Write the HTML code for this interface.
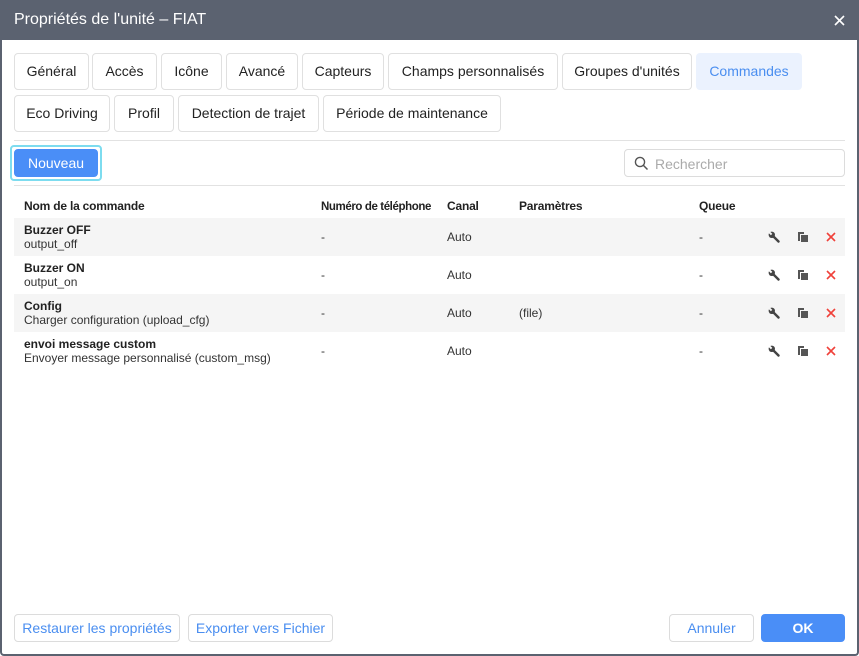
<!DOCTYPE html>
<html><head><meta charset="utf-8"><style>
*{box-sizing:border-box;margin:0;padding:0}
body{width:859px;height:656px;overflow:hidden;background:#fff;font-family:"Liberation Sans",Arial,sans-serif;position:relative}
.frame{position:absolute;left:0;top:0;width:859px;height:656px;border:2px solid #5b6270;border-top:none;border-radius:0 0 4px 4px}
.title{position:absolute;left:0;top:0;width:859px;height:40px;background:#5b6270;color:#fff;font-size:16px;line-height:40px;padding-left:14px}
.close{position:absolute;right:14px;top:15px}
.tab{position:absolute;height:37px;border:1px solid #e0e0e0;border-radius:4px;font-size:14px;color:#222;text-align:center;line-height:35px;background:#fff}
.tab.act{background:#ebf2fe;border-color:#ebf2fe;color:#4a8ef0}
.sep{position:absolute;left:14px;width:831px;height:1px;background:#e2e2e2}
.btn{position:absolute;border:1px solid #dcdcdc;border-radius:4px;font-size:14px;color:#4a8ef0;text-align:center;background:#fff}
.prim{background:#4a8ef7;border-color:#4a8ef7;color:#fff}
.th{position:absolute;top:199px;font-size:12px;font-weight:bold;color:#222;letter-spacing:-0.2px}
.row{position:absolute;left:14px;width:831px;height:38px}
.row.g{background:#f5f5f5}
.c{position:absolute;font-size:12px;color:#333}
.n1{left:10px;top:5px;font-weight:bold;color:#222}
.n2{left:10px;top:19px}
.ic{position:absolute;top:13px}
</style></head><body>
<div class="title">Propriétés de l'unité – FIAT</div>
<svg class="close" width="11" height="11" viewBox="0 0 11 11"><path d="M1 1L10 10M10 1L1 10" stroke="#fff" stroke-width="1.6"/></svg>
<div class="frame"></div>

<div class="tab" style="left:14px;top:53px;width:75px">Général</div>
<div class="tab" style="left:92px;top:53px;width:65px">Accès</div>
<div class="tab" style="left:161px;top:53px;width:61px">Icône</div>
<div class="tab" style="left:226px;top:53px;width:72px">Avancé</div>
<div class="tab" style="left:302px;top:53px;width:82px">Capteurs</div>
<div class="tab" style="left:388px;top:53px;width:170px">Champs personnalisés</div>
<div class="tab" style="left:562px;top:53px;width:130px">Groupes d'unités</div>
<div class="tab act" style="left:696px;top:53px;width:106px">Commandes</div>
<div class="tab" style="left:14px;top:95px;width:96px">Eco Driving</div>
<div class="tab" style="left:114px;top:95px;width:60px">Profil</div>
<div class="tab" style="left:178px;top:95px;width:141px">Detection de trajet</div>
<div class="tab" style="left:323px;top:95px;width:178px">Période de maintenance</div>

<div class="sep" style="top:140px"></div>
<div style="position:absolute;left:10px;top:145px;width:92px;height:36px;border:2px solid #7ddcef;border-radius:4px"></div>
<div class="btn prim" style="left:14px;top:149px;width:84px;height:28px;line-height:26px">Nouveau</div>
<div style="position:absolute;left:624px;top:149px;width:221px;height:28px;border:1px solid #dcdcdc;border-radius:4px">
<svg style="position:absolute;left:9px;top:6px" width="15" height="15" viewBox="0 0 15 15"><circle cx="6" cy="6" r="4.6" fill="none" stroke="#555" stroke-width="1.4"/><path d="M9.4 9.4L13.5 13.5" stroke="#555" stroke-width="1.5"/></svg>
<span style="position:absolute;left:30px;top:6px;font-size:14px;color:#aaa">Rechercher</span></div>
<div class="sep" style="top:185px"></div>

<div class="th" style="left:24px">Nom de la commande</div>
<div class="th" style="left:321px;top:201px;font-size:11.5px;letter-spacing:-0.4px">Numéro de téléphone</div>
<div class="th" style="left:447px">Canal</div>
<div class="th" style="left:519px">Paramètres</div>
<div class="th" style="left:699px">Queue</div>

<div class="row g" style="top:218px"><div class="c n1">Buzzer OFF</div><div class="c n2">output_off</div><div class="c" style="left:307px;top:12px">-</div><div class="c" style="left:433px;top:12px">Auto</div><div class="c" style="left:685px;top:12px">-</div>
<svg class="ic" style="left:754px" width="12" height="12" viewBox="0 0 12 12"><path d="M4.5 4.5L10.5 10.5" stroke="#444" stroke-width="2.4" stroke-linecap="round"/><circle cx="3.8" cy="3.8" r="3.2" fill="#444"/><path d="M0.5 0.5L3.6 3.6" stroke="#f5f5f5" stroke-width="2"/></svg>
<svg class="ic" style="left:783px" width="12" height="12" viewBox="0 0 12 12"><path d="M1 1h6v2H3v7H1z" fill="#555"/><rect x="4" y="4" width="7" height="7" fill="#555"/></svg>
<svg class="ic" style="left:812px;top:14px" width="10" height="10" viewBox="0 0 10 10"><path d="M1 1L9 9M9 1L1 9" stroke="#f0413a" stroke-width="1.6"/></svg></div>

<div class="row" style="top:256px"><div class="c n1">Buzzer ON</div><div class="c n2">output_on</div><div class="c" style="left:307px;top:12px">-</div><div class="c" style="left:433px;top:12px">Auto</div><div class="c" style="left:685px;top:12px">-</div>
<svg class="ic" style="left:754px" width="12" height="12" viewBox="0 0 12 12"><path d="M4.5 4.5L10.5 10.5" stroke="#444" stroke-width="2.4" stroke-linecap="round"/><circle cx="3.8" cy="3.8" r="3.2" fill="#444"/><path d="M0.5 0.5L3.6 3.6" stroke="#fff" stroke-width="2"/></svg>
<svg class="ic" style="left:783px" width="12" height="12" viewBox="0 0 12 12"><path d="M1 1h6v2H3v7H1z" fill="#555"/><rect x="4" y="4" width="7" height="7" fill="#555"/></svg>
<svg class="ic" style="left:812px;top:14px" width="10" height="10" viewBox="0 0 10 10"><path d="M1 1L9 9M9 1L1 9" stroke="#f0413a" stroke-width="1.6"/></svg></div>

<div class="row g" style="top:294px"><div class="c n1">Config</div><div class="c n2">Charger configuration (upload_cfg)</div><div class="c" style="left:307px;top:12px">-</div><div class="c" style="left:433px;top:12px">Auto</div><div class="c" style="left:505px;top:12px">(file)</div><div class="c" style="left:685px;top:12px">-</div>
<svg class="ic" style="left:754px" width="12" height="12" viewBox="0 0 12 12"><path d="M4.5 4.5L10.5 10.5" stroke="#444" stroke-width="2.4" stroke-linecap="round"/><circle cx="3.8" cy="3.8" r="3.2" fill="#444"/><path d="M0.5 0.5L3.6 3.6" stroke="#f5f5f5" stroke-width="2"/></svg>
<svg class="ic" style="left:783px" width="12" height="12" viewBox="0 0 12 12"><path d="M1 1h6v2H3v7H1z" fill="#555"/><rect x="4" y="4" width="7" height="7" fill="#555"/></svg>
<svg class="ic" style="left:812px;top:14px" width="10" height="10" viewBox="0 0 10 10"><path d="M1 1L9 9M9 1L1 9" stroke="#f0413a" stroke-width="1.6"/></svg></div>

<div class="row" style="top:332px"><div class="c n1">envoi message custom</div><div class="c n2">Envoyer message personnalisé (custom_msg)</div><div class="c" style="left:307px;top:12px">-</div><div class="c" style="left:433px;top:12px">Auto</div><div class="c" style="left:685px;top:12px">-</div>
<svg class="ic" style="left:754px" width="12" height="12" viewBox="0 0 12 12"><path d="M4.5 4.5L10.5 10.5" stroke="#444" stroke-width="2.4" stroke-linecap="round"/><circle cx="3.8" cy="3.8" r="3.2" fill="#444"/><path d="M0.5 0.5L3.6 3.6" stroke="#fff" stroke-width="2"/></svg>
<svg class="ic" style="left:783px" width="12" height="12" viewBox="0 0 12 12"><path d="M1 1h6v2H3v7H1z" fill="#555"/><rect x="4" y="4" width="7" height="7" fill="#555"/></svg>
<svg class="ic" style="left:812px;top:14px" width="10" height="10" viewBox="0 0 10 10"><path d="M1 1L9 9M9 1L1 9" stroke="#f0413a" stroke-width="1.6"/></svg></div>

<div class="btn" style="left:14px;top:614px;width:166px;height:28px;line-height:26px">Restaurer les propriétés</div>
<div class="btn" style="left:188px;top:614px;width:145px;height:28px;line-height:26px">Exporter vers Fichier</div>
<div class="btn" style="left:669px;top:614px;width:85px;height:28px;line-height:26px">Annuler</div>
<div class="btn prim" style="left:761px;top:614px;width:84px;height:28px;line-height:26px;font-weight:bold">OK</div>
</body></html>
